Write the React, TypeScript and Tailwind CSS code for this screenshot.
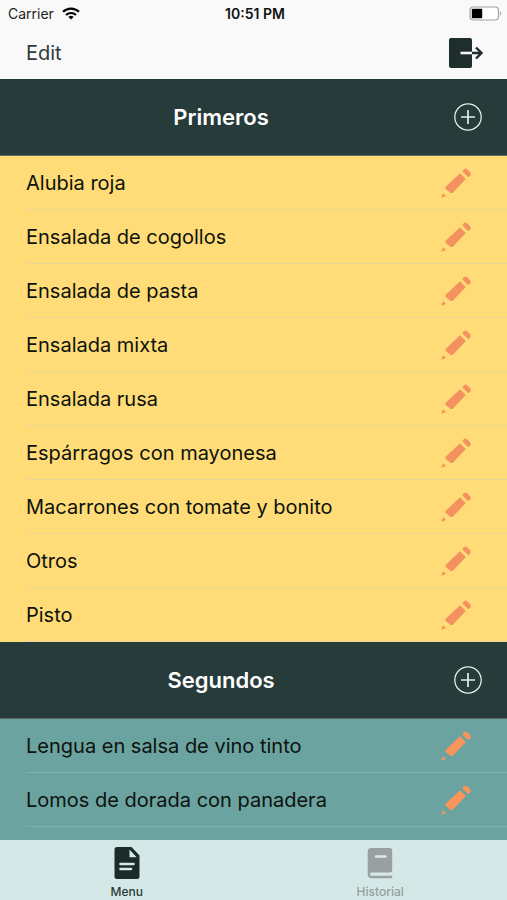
import React from "react";

type Section = {
  title: string;
  tone: string;
  line: string;
  pencil: string;
  dishes: string[];
};

const sections: Section[] = [
  {
    title: "Primeros",
    tone: "bg-[#ffdc77]",
    line: "border-[#ecd697]",
    pencil: "text-[#f3925f]",
    dishes: [
      "Alubia roja",
      "Ensalada de cogollos",
      "Ensalada de pasta",
      "Ensalada mixta",
      "Ensalada rusa",
      "Espárragos con mayonesa",
      "Macarrones con tomate y bonito",
      "Otros",
      "Pisto",
    ],
  },
  {
    title: "Segundos",
    tone: "bg-[#6ba3a1]",
    line: "border-[#7db0ae]",
    pencil: "text-[#f9945c]",
    dishes: ["Lengua en salsa de vino tinto", "Lomos de dorada con panadera"],
  },
];

function WifiIcon() {
  return (
    <svg viewBox="0 0 18 13" className="h-[13px] w-[18px]" fill="none" stroke="#000" strokeWidth="2.2" aria-hidden="true">
      <path d="M1 4.8a11.6 11.6 0 0 1 16 0" />
      <path d="M4 8a7.3 7.3 0 0 1 10 0" />
      <path d="M6.4 10a3.8 3.8 0 0 1 5.2 0L9 12.6z" fill="#000" stroke="none" />
    </svg>
  );
}

function BatteryIcon() {
  return (
    <svg viewBox="0 0 33 15" className="h-[15px] w-[33px]" aria-hidden="true">
      <rect x="1" y="1" width="28.5" height="13" rx="3.5" fill="#fff" stroke="#a3a3a3" strokeWidth="1.2" />
      <rect x="2.8" y="2.8" width="10.4" height="9.4" rx="1" fill="#000" />
      <path d="M31 5.4c1.6.6 1.6 3.6 0 4.2z" fill="#a3a3a3" />
    </svg>
  );
}

function ExitIcon() {
  return (
    <svg viewBox="0 0 34 30" className="h-[30px] w-[34px]" fill="none" aria-hidden="true">
      <rect width="23" height="30" rx="2" fill="#1d2e2d" />
      <path d="M11.5 15H23" stroke="#f9f9f9" strokeWidth="2.6" />
      <path d="M23 15h9.5M27 9.5l5.5 5.5-5.5 5.5" stroke="#1d2e2d" strokeWidth="2.4" />
    </svg>
  );
}

function PlusIcon() {
  return (
    <svg viewBox="0 0 28 28" className="size-7" fill="none" stroke="#e2efed" aria-hidden="true">
      <circle cx="14" cy="14" r="13.2" strokeWidth="1.3" />
      <path d="M14 7v14M7 14h14" strokeWidth="1.7" />
    </svg>
  );
}

function PencilIcon() {
  return (
    <svg viewBox="0 0 30 30" className="size-[30px]" fill="currentColor" aria-hidden="true">
      <path d="M19 5.3 24.8 11.1 12 24.4q-1.5 1.3-3 .2L4.800 20.9q-1-1.200.2-2.400z" />
      <path d="M21.200 3.200 23 1.300q1.600-1.400 3.300.1l2.700 2.700q1.500 1.600.1 3.300L27.200 9.300z" />
      <path d="M2.300 25.300 5 28 .9 29.500q-.8.100-.5-.7z" />
    </svg>
  );
}

function MenuIcon() {
  return (
    <svg viewBox="0 0 26 34" className="h-[34px] w-[26px]" aria-hidden="true">
      <path d="M3 1h14.5L25.500 9.500V30.500a2.500 2.500 0 0 1-2.500 2.500H3A2.500 2.500 0 0 1 .5 30.500v-27A2.500 2.500 0 0 1 3 1z" fill="#1b2b2a" />
      <path d="M15.500 3.500v7.700h7.200z" fill="#d4e9e7" />
      <path d="M6.500 18h13M6.500 23h10.500" stroke="#d4e9e7" strokeWidth="2.600" strokeLinecap="round" />
    </svg>
  );
}

function BookIcon() {
  return (
    <svg viewBox="0 0 26 34" className="h-[34px] w-[26px]" aria-hidden="true">
      <path d="M4.500 2h18.200A2.500 2.500 0 0 1 25.200 4.500V24a2.500 2.500 0 0 1-2 2.500H4.500q-1.500.1-1.500 1.700 0 1.500 1.500 1.500h20.700v2.500H4.500Q.7 32 .7 28V5.500Q.7 2 4.500 2z" fill="#9aa09f" />
      <path d="M9 10.500h9.500" stroke="#dce9e7" strokeWidth="2.400" strokeLinecap="round" />
    </svg>
  );
}

function DishSection({ title, tone, line, pencil, dishes }: Section) {
  return (
    <section className={tone}>
      <header className="grid h-[77px] grid-cols-[1fr_auto] items-center gap-3 border-b border-[#5f6b62] bg-[#263b3a] pr-[25px]">
        <h2 className="text-center text-[22px] leading-7 font-semibold text-white">{title}</h2>
        <button type="button" aria-label={`Añadir a ${title}`} className="size-7">
          <PlusIcon />
        </button>
      </header>
      <ul>
        {dishes.map((dish) => (
          <li key={dish} className="pl-[26px]">
            <div className={`flex h-[54px] items-center justify-between border-b pt-px pr-9 ${line}`}>
              <span className="text-[20px] leading-7 text-[#0d120d]">{dish}</span>
              <button type="button" aria-label={`Editar ${dish}`} className={pencil}>
                <PencilIcon />
              </button>
            </div>
          </li>
        ))}
      </ul>
    </section>
  );
}

export default function App() {
  return (
    <div className="flex h-screen flex-col bg-[#6ba3a1] font-['Inter','Liberation_Sans',sans-serif]">
      <div className="bg-[#f9f9f9]">
        <div className="grid h-[27px] grid-cols-3 items-center pr-[5px] pl-2 text-[14px] leading-5 text-[#222]">
          <div className="flex items-center gap-2">
            <span>Carrier</span>
            <WifiIcon />
          </div>
          <time className="text-center font-semibold text-[#111]">10:51 PM</time>
          <div className="flex justify-end">
            <BatteryIcon />
          </div>
        </div>
        <nav className="flex h-[52px] items-center justify-between pr-6 pl-[26px]">
          <button type="button" className="text-[20px] leading-7 text-[#2f3b3a]">
            Edit
          </button>
          <button type="button" aria-label="Salir">
            <ExitIcon />
          </button>
        </nav>
      </div>

      <main className="min-h-0 flex-1 overflow-y-auto">
        {sections.map((section) => (
          <DishSection key={section.title} {...section} />
        ))}
      </main>

      <nav className="grid h-[60px] grid-cols-2 bg-[#d4e9e7] pt-[6px] text-[12px] leading-4 font-medium">
        <button type="button" aria-current="page" className="flex flex-col items-center gap-1 text-[#2b3a39]">
          <MenuIcon />
          <span>Menu</span>
        </button>
        <button type="button" className="flex flex-col items-center gap-1 text-[#949e9d]">
          <BookIcon />
          <span>Historial</span>
        </button>
      </nav>
    </div>
  );
}
